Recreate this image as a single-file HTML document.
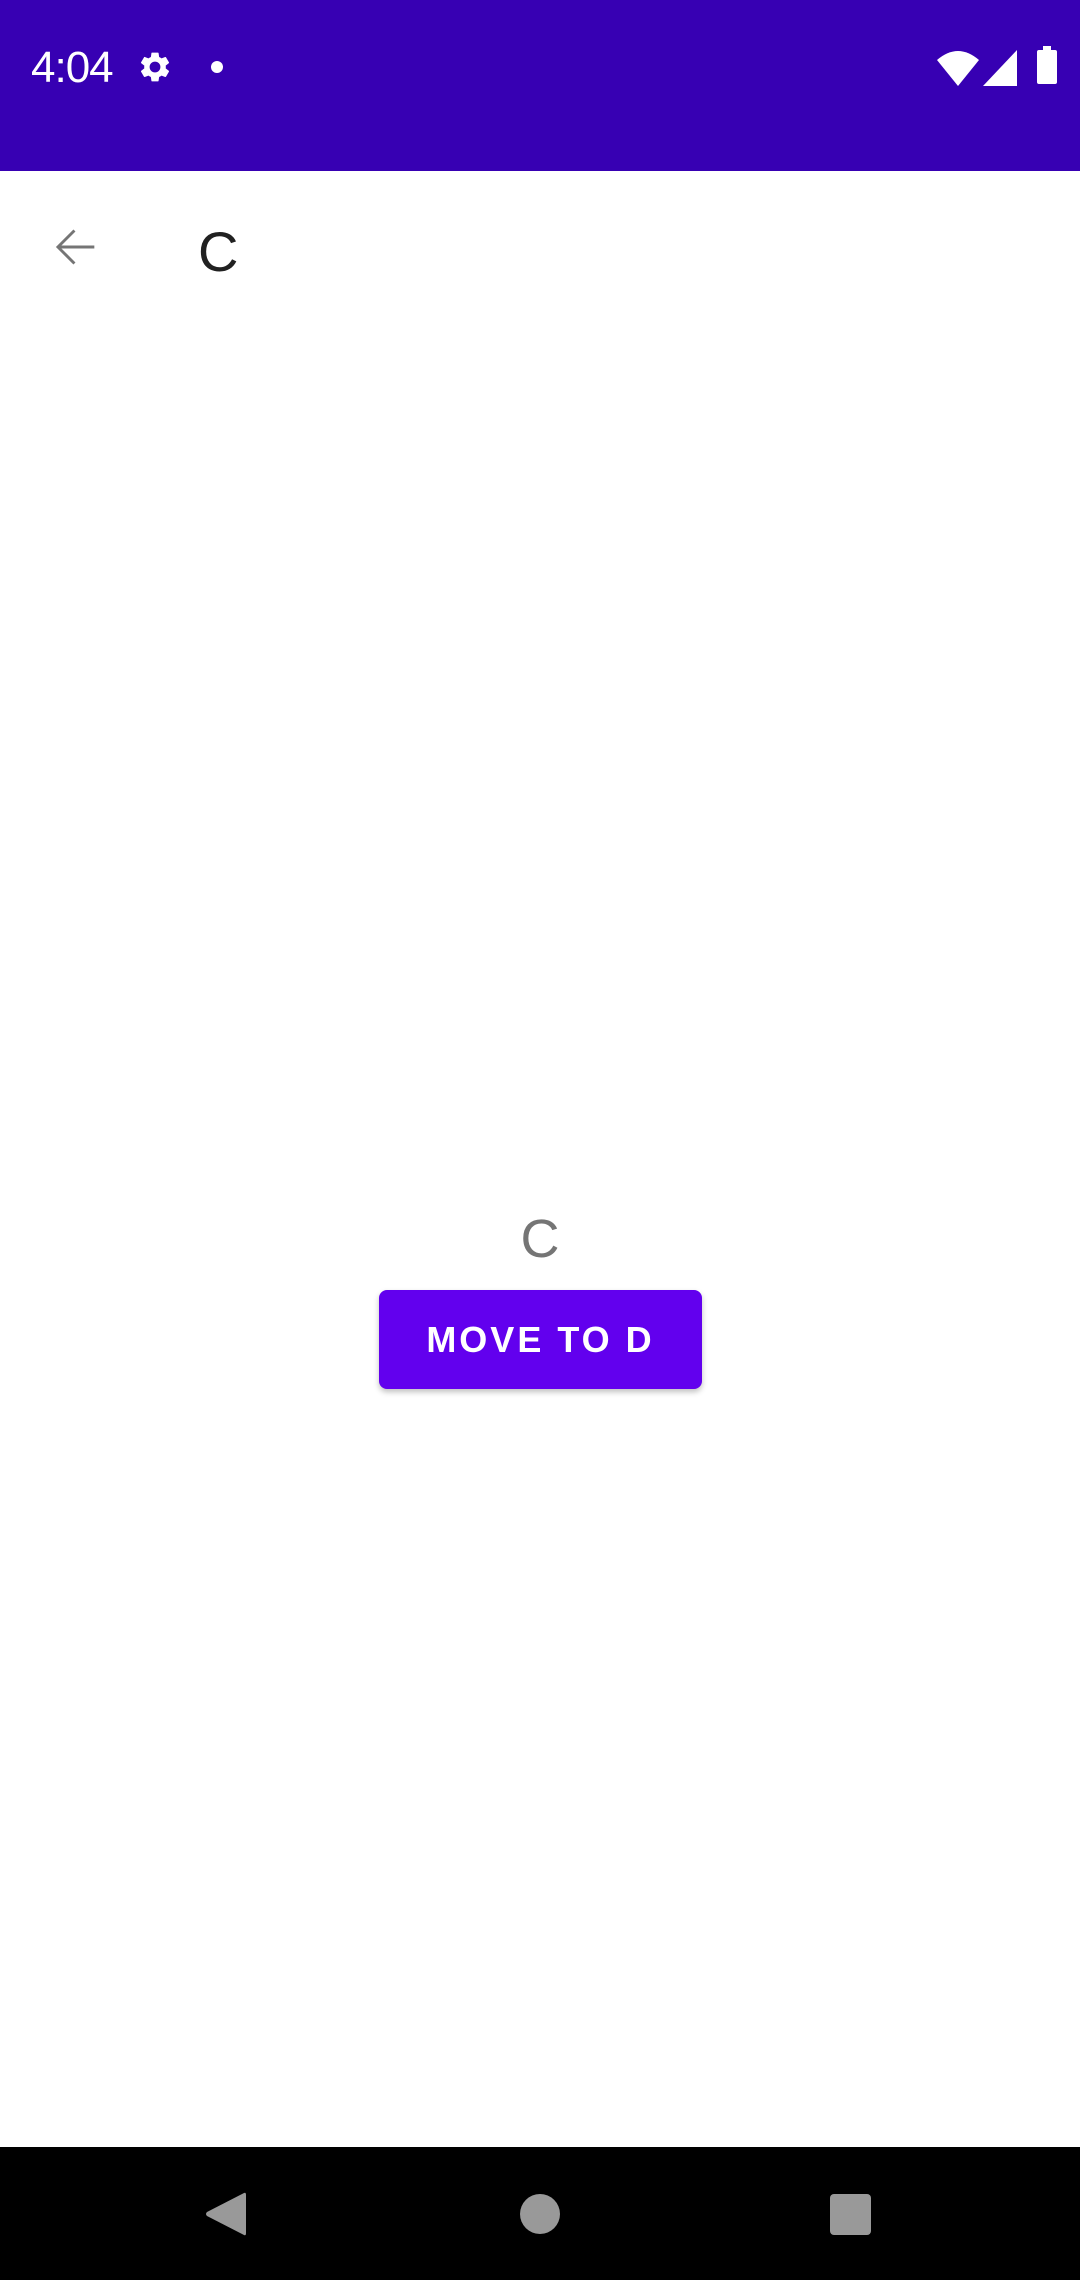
<!DOCTYPE html>
<html><head><meta charset="utf-8"><style>
html,body{margin:0;padding:0;width:1080px;height:2280px;background:#fff;overflow:hidden;font-family:"Liberation Sans",sans-serif;position:relative}
.sb{position:absolute;left:0;top:0;width:1080px;height:171px;background:#3700b3}
.abs{position:absolute}
.nav{position:absolute;left:0;top:2147px;width:1080px;height:133px;background:#000}
</style></head><body>
<div class="sb">
  <div class="abs" style="left:31px;top:44px;color:#fff;font-size:44px;line-height:48px;letter-spacing:-1px">4:04</div>
  <svg class="abs" style="left:137px;top:49px" width="36" height="36" viewBox="0 0 24 24"><path fill="#fff" d="M19.14 12.94c.04-.3.06-.61.06-.94 0-.32-.02-.64-.07-.94l2.030-1.58a.49.49 0 0 0 .12-.61l-1.92-3.320a.49.49 0 0 0-.59-.22l-2.39.96c-.5-.38-1.03-.7-1.62-.94l-.36-2.54a.48.48 0 0 0-.48-.41h-3.84c-.24 0-.43.17-.47.41l-.36 2.54c-.59.24-1.13.57-1.62.94l-2.39-.96a.48.48 0 0 0-.59.22L2.74 8.87c-.12.21-.08.47.12.61l2.03 1.58c-.05.3-.09.63-.09.94s.02.64.07.94l-2.03 1.58a.49.49 0 0 0-.12.61l1.92 3.32c.12.22.37.29.59.22l2.39-.96c.5.38 1.03.7 1.62.94l.36 2.54c.05.24.24.41.48.41h3.84c.24 0 .44-.17.47-.41l.36-2.54c.59-.24 1.13-.56 1.62-.94l2.39.96c.22.08.47 0 .59-.22l1.92-3.32c.12-.22.07-.47-.12-.61l-2.01-1.58zM12 15.6A3.6 3.6 0 1 1 12 8.4a3.6 3.6 0 0 1 0 7.2z"/></svg>
  <div class="abs" style="left:211px;top:61px;width:12px;height:12px;border-radius:50%;background:#fff"></div>
  <svg class="abs" style="left:937px;top:50px" width="42" height="36" viewBox="0 0 42 36"><path fill="#fff" d="M0 10 Q21 -8 42 10 L21 36 Z"/></svg>
  <svg class="abs" style="left:983px;top:50px" width="34" height="36" viewBox="0 0 34 36"><path fill="#fff" d="M34 0 V36 H0 Z"/><path fill="#5a3bc4" d="M25 14 L8 32 H25 Z" opacity=".0"/></svg>
  <div class="abs" style="left:1037px;top:50px;width:20px;height:34px;background:#fff;border-radius:2px"></div>
  <div class="abs" style="left:1043px;top:46px;width:8px;height:5px;background:#fff"></div>
</div>
<svg class="abs" style="left:46px;top:218px" width="58" height="58" viewBox="0 0 24 24"><path fill="#757575" d="M20 11.4H6.4l5.8-5.8-.85-.85L4.1 12l7.25 7.25.85-.85-5.8-5.8H20z"/></svg>
<div class="abs" style="left:198px;top:220px;font-size:56px;line-height:64px;color:#212121">C</div>
<div class="abs" style="left:0;width:1080px;top:1207px;text-align:center;font-size:54px;line-height:64px;color:#757575">C</div>
<div class="abs" style="left:379px;top:1290px;width:323px;height:99px;background:#6200ee;border-radius:8px;box-shadow:0 3px 6px rgba(0,0,0,.25);color:#fff;font-weight:bold;font-size:36px;letter-spacing:3px;text-align:center;line-height:99px">MOVE TO D</div>
<div class="nav">
  <svg class="abs" style="left:204px;top:44px" width="44" height="46" viewBox="0 0 44 46"><path fill="#999" d="M40 2 Q42 1 42 4 V42 Q42 45 40 44 L3 25 Q1 23 3 21 Z"/></svg>
  <div class="abs" style="left:520px;top:47px;width:40px;height:40px;border-radius:50%;background:#999"></div>
  <div class="abs" style="left:830px;top:47px;width:41px;height:41px;border-radius:4px;background:#999"></div>
</div>
</body></html>
